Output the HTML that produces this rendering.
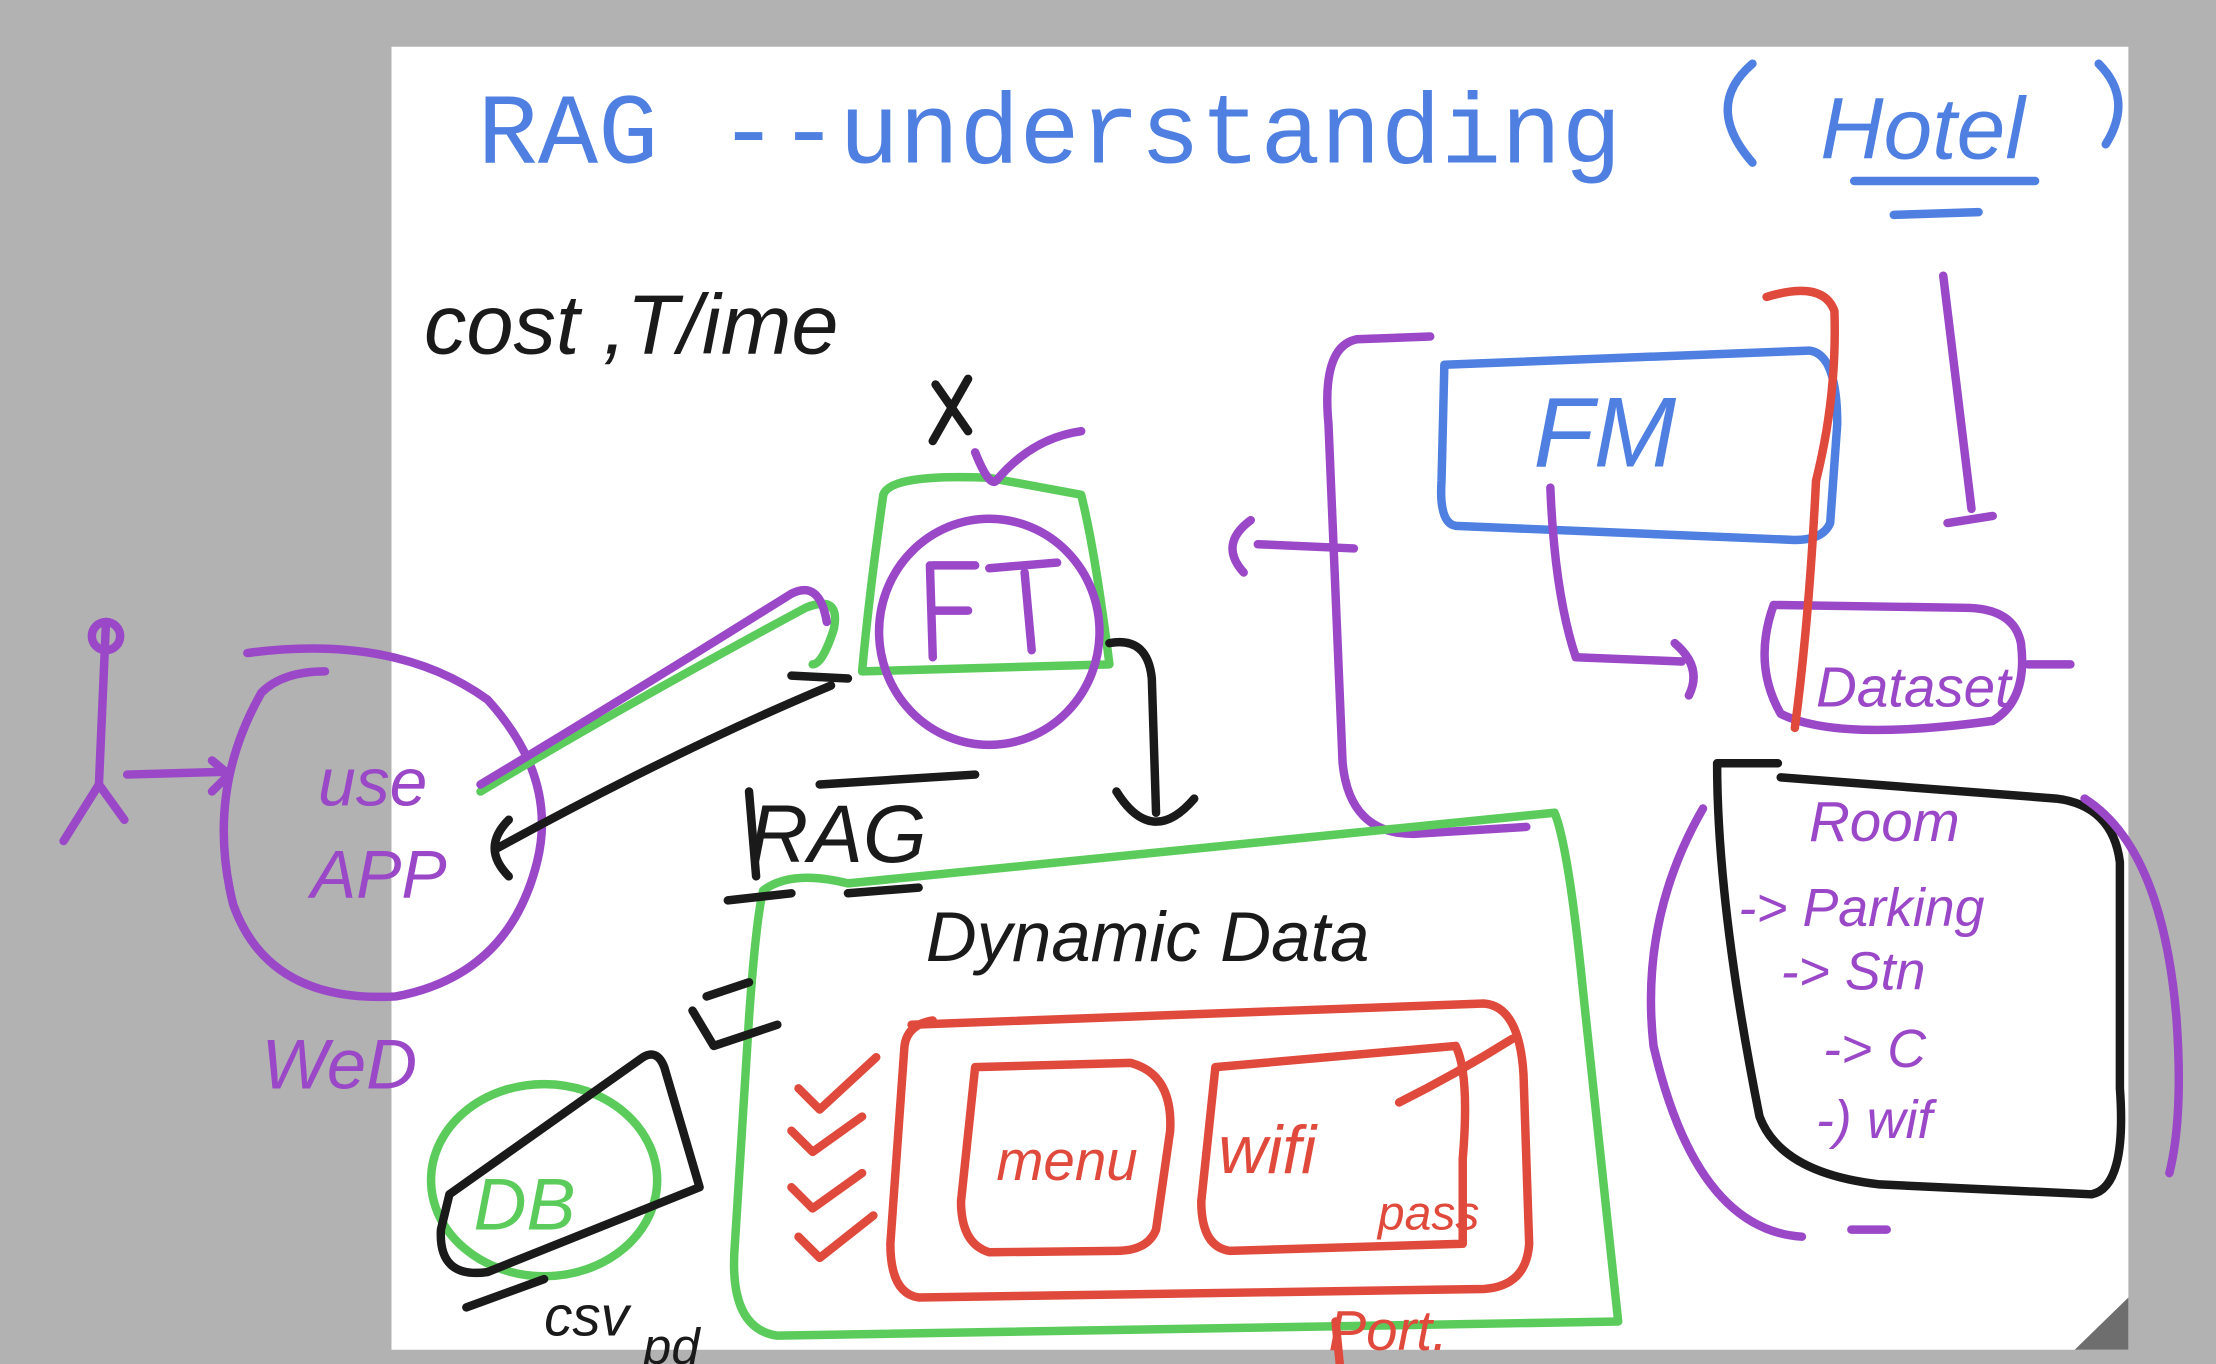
<!DOCTYPE html>
<html><head><meta charset="utf-8"><style>
html,body{margin:0;padding:0;width:2216px;height:1364px;overflow:hidden;background:#b2b2b2}
svg{display:block}
</style></head><body>
<svg width="2216" height="1364" viewBox="0 0 1568 965" xmlns="http://www.w3.org/2000/svg">
<rect x="0" y="0" width="1568" height="965" fill="#b2b2b2"/>
<rect x="277" y="33" width="1229" height="922" fill="#ffffff"/>
<polygon points="1506,918 1506,955 1468,955" fill="#6e6e6e"/>
<text x="338" y="115" font-family="Liberation Mono, monospace" font-size="71" fill="#4f7fe0">RAG --understanding</text>
<g fill="none" stroke-linecap="round" stroke-linejoin="round" stroke-width="6">
<path d="M1240 45 Q1205 75 1240 115" stroke="#4f7fe0"/>
<path d="M1485 45 Q1510 70 1490 102" stroke="#4f7fe0"/>
<path d="M1312 128 L1440 128 M1340 152 L1400 150" stroke="#4f7fe0"/>
<path d="M1022 258 L1280 248 Q1300 250 1300 300 L1295 370 Q1290 382 1270 382 L1030 372 Q1018 370 1020 340 Z" stroke="#4f7fe0"/>
<path d="M1012 238 L960 240 Q935 245 940 300 L950 540 Q955 590 1000 590 L1080 585" stroke="#9a48c8"/>
<path d="M885 368 Q862 385 880 405 M890 385 L958 388" stroke="#9a48c8"/>
<path d="M1097 345 Q1100 420 1115 465 L1190 468 M1185 455 Q1205 472 1195 492" stroke="#9a48c8"/>
<path d="M1375 195 L1395 360 M1378 370 L1410 365" stroke="#9a48c8"/>
<path d="M1255 428 Q1240 470 1260 505 Q1300 525 1410 510 Q1435 495 1430 455 Q1425 430 1390 430 L1255 428 M1435 470 L1465 470" stroke="#9a48c8"/>
<path d="M1250 210 Q1290 198 1298 220 Q1300 280 1285 340 Q1280 440 1270 515" stroke="#e04a3c"/>
<path d="M1258 540 L1215 540 Q1215 640 1245 790 Q1260 830 1330 838 L1480 845 Q1505 840 1500 770 L1500 610 Q1495 570 1455 565 L1260 550" stroke="#1a1a1a"/>
<path d="M1205 572 Q1160 650 1170 740 Q1200 870 1275 875 M1310 870 L1335 870" stroke="#9a48c8"/>
<path d="M1475 565 Q1530 600 1540 720 Q1545 790 1535 830" stroke="#9a48c8"/>
<path d="M625 350 Q630 335 700 338 L765 350 Q775 390 785 470 L610 475 Q615 420 625 350" stroke="#5bcc5b"/>
<ellipse cx="700" cy="447" rx="78" ry="80" stroke="#9a48c8"/>
<path d="M658 400 L660 465 M660 400 L690 400 M662 432 L685 432 M700 402 L748 398 M725 405 L730 460" stroke="#9a48c8"/>
<path d="M690 320 Q700 345 705 340 Q730 310 765 305" stroke="#9a48c8"/>
<path d="M662 272 L685 305 M685 268 L660 312" stroke="#1a1a1a"/>
<path d="M785 455 Q812 450 815 480 L818 575 M790 560 Q815 600 845 565" stroke="#1a1a1a"/>
<path d="M175 462 Q280 448 345 495 Q395 550 380 610 Q360 690 280 705 Q190 710 165 640 Q145 560 185 490 Q200 475 230 475" stroke="#9a48c8"/>
<path d="M340 560 Q440 500 570 430 Q595 420 590 445 Q582 470 575 470" stroke="#5bcc5b"/>
<path d="M340 555 Q440 495 560 420 Q580 410 585 440" stroke="#9a48c8"/>
<path d="M600 480 L560 478 M352 600 Q480 530 588 485" stroke="#1a1a1a"/>
<path d="M360 580 Q340 600 360 620" stroke="#1a1a1a"/>
<path d="M75 440 L70 555 L45 595 M70 555 L88 580 M90 548 L160 546 M150 538 L162 548 L150 560" stroke="#9a48c8"/>
<circle cx="75" cy="450" r="10" stroke="#9a48c8"/>
<path d="M540 630 Q560 615 600 625 L1100 575 Q1110 600 1120 700 L1145 935 L550 945 Q515 940 520 880 L530 720 Q535 650 540 630" stroke="#5bcc5b"/>
<path d="M530 560 L535 620 M515 637 L560 632 M600 632 L650 628 M580 555 L690 548" stroke="#1a1a1a"/>
<path d="M645 725 L1050 710 Q1075 712 1078 760 L1082 880 Q1080 910 1050 912 L650 918 Q630 915 630 880 L640 740 Q642 725 660 722" stroke="#e04a3c"/>
<path d="M690 755 L800 752 Q830 760 828 800 L818 870 Q812 885 790 885 L700 886 Q680 880 680 850 Z" stroke="#e04a3c"/>
<path d="M860 755 L1030 740 Q1040 760 1035 820 L1035 880 L870 885 Q850 882 850 850 Z" stroke="#e04a3c"/>
<path d="M990 780 Q1030 760 1070 735" stroke="#e04a3c"/>
<path d="M565 770 L580 785 L620 748 M560 800 L575 815 L610 790 M560 840 L575 855 L610 830 M565 875 L580 890 L618 860" stroke="#e04a3c"/>
<path d="M490 715 L505 740 L550 725 M500 705 L530 695" stroke="#1a1a1a"/>
<ellipse cx="385" cy="835" rx="80" ry="68" stroke="#5bcc5b"/>
<path d="M318 845 L455 748 Q465 742 470 755 L495 840 L345 900 Q310 905 312 870 Z" stroke="#1a1a1a"/>
<path d="M330 925 L385 905" stroke="#1a1a1a"/>
<path d="M945 935 L948 965" stroke="#e04a3c"/>
</g>
<g font-family="Liberation Sans, sans-serif" font-style="italic">
<text x="1288" y="112" font-size="62" fill="#4f7fe0">Hotel</text>
<text x="300" y="250" font-size="60" fill="#1a1a1a">cost ,T/ime</text>
<text x="1085" y="330" font-size="70" fill="#4f7fe0">FM</text>
<text x="1285" y="500" font-size="40" fill="#9a48c8">Dataset</text>
<text x="1280" y="595" font-size="40" fill="#9a48c8">Room</text>
<text x="1230" y="655" font-size="38" fill="#9a48c8">-&gt; Parking</text>
<text x="1260" y="700" font-size="38" fill="#9a48c8">-&gt; Stn</text>
<text x="1290" y="755" font-size="38" fill="#9a48c8">-&gt; C</text>
<text x="1285" y="805" font-size="38" fill="#9a48c8">-) wif</text>
<text x="225" y="570" font-size="48" fill="#9a48c8">use</text>
<text x="220" y="635" font-size="48" fill="#9a48c8">APP</text>
<text x="185" y="770" font-size="50" fill="#9a48c8">WeD</text>
<text x="530" y="610" font-size="58" fill="#1a1a1a">RAG</text>
<text x="655" y="680" font-size="50" fill="#1a1a1a">Dynamic Data</text>
<text x="705" y="835" font-size="40" fill="#e04a3c">menu</text>
<text x="862" y="830" font-size="48" fill="#e04a3c">wifi</text>
<text x="975" y="870" font-size="34" fill="#e04a3c">pass</text>
<text x="940" y="955" font-size="40" fill="#e04a3c">Port.</text>
<text x="335" y="870" font-size="52" fill="#5bcc5b">DB</text>
<text x="385" y="945" font-size="40" fill="#1a1a1a">csv</text>
<text x="455" y="965" font-size="36" fill="#1a1a1a">pd</text>
</g>
</svg>
</body></html>
